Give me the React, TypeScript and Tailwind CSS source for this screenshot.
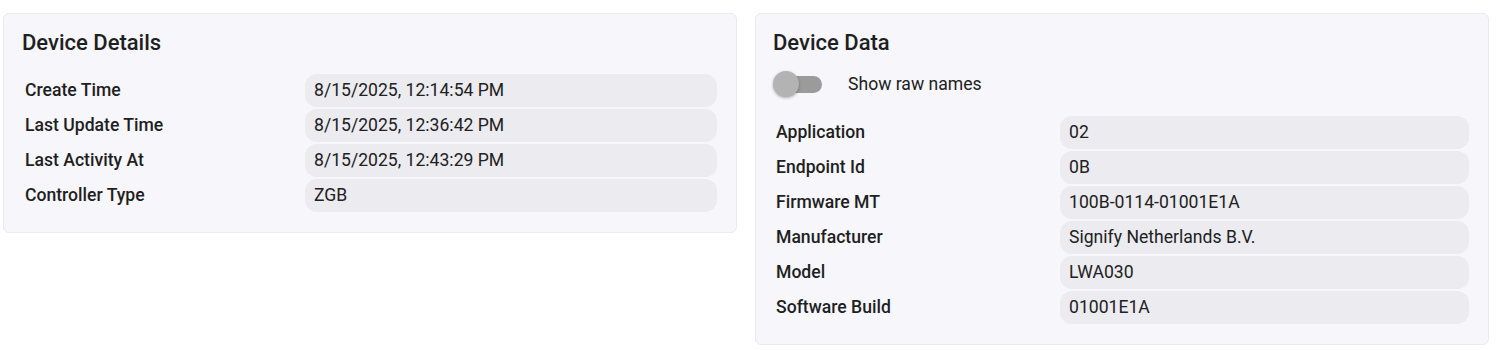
import { useState } from "react";

const details = [
  ["Create Time", "8/15/2025, 12:14:54 PM"],
  ["Last Update Time", "8/15/2025, 12:36:42 PM"],
  ["Last Activity At", "8/15/2025, 12:43:29 PM"],
  ["Controller Type", "ZGB"],
];

const data = [
  ["Application", "02"],
  ["Endpoint Id", "0B"],
  ["Firmware MT", "100B-0114-01001E1A"],
  ["Manufacturer", "Signify Netherlands B.V."],
  ["Model", "LWA030"],
  ["Software Build", "01001E1A"],
];

function Rows({ rows, labelWidth }: { rows: string[][]; labelWidth: string }) {
  return (
    <div className="flex flex-col gap-[2px]">
      {rows.map(([label, value]) => (
        <div key={label} className="flex items-center">
          <div className={`${labelWidth} shrink-0 pl-[3px] text-[17.6px] font-medium text-[#1f1f1f]`}>{label}</div>
          <div className="flex-1 h-[33px] flex items-center rounded-[12px] bg-[#ebebf0] px-[9px] text-[17.6px] text-[#212121]">
            {value}
          </div>
        </div>
      ))}
    </div>
  );
}

export default function App() {
  const [raw, setRaw] = useState(false);

  return (
    <div className="w-[1498px] h-[350px] bg-white pt-[13px] pl-[3px] pr-[9px] font-['Roboto',sans-serif]">
      <div className="grid grid-cols-2 gap-[18px] items-start">
        {/* left card */}
        <section className="rounded-[6px] border border-[#ebebef] bg-[#f6f6fb] pt-[13px] pb-[20px] pl-[18px] pr-[19px]">
          <h2 className="text-[22px] font-medium leading-[32px] text-[#1f1f1f] mb-[15px]">Device Details</h2>
          <Rows rows={details} labelWidth="w-[283px]" />
        </section>

        {/* right card */}
        <section className="rounded-[6px] border border-[#ebebef] bg-[#f6f6fb] pt-[13px] pb-[20px] pl-[17px] pr-[19px]">
          <h2 className="text-[22px] font-medium leading-[32px] text-[#1f1f1f]">Device Data</h2>
          <div className="flex items-center h-[38px] mt-[6px] mb-[13px]">
            <button
              onClick={() => setRaw(!raw)}
              className="relative w-[50px] h-[26px] flex items-center shrink-0"
            >
              <span className="absolute left-[3px] right-[1px] h-[17px] rounded-full bg-[#9b9b9b]" />
              <span
                className={`absolute top-0 w-[26px] h-[26px] rounded-full bg-[#b3b3b3] shadow-[0_1px_3px_rgba(0,0,0,0.3)] ${raw ? "left-[24px]" : "left-0"}`}
              />
            </button>
            <span className="ml-[25px] text-[17.6px] text-[#212121]">Show raw names</span>
          </div>
          <Rows rows={data} labelWidth="w-[287px]" />
        </section>
      </div>
    </div>
  );
}
